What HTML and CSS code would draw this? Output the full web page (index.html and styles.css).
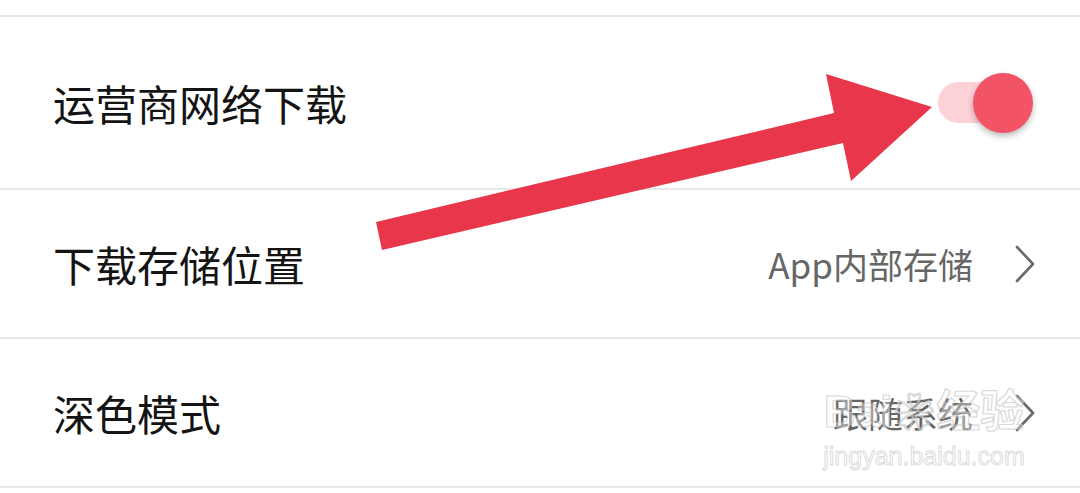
FILE: index.html
```html
<!DOCTYPE html>
<html lang="zh-CN">
<head>
<meta charset="utf-8">
<title>设置</title>
<link rel="stylesheet" href="styles.css">
</head>
<body>
<div class="page">
  <div class="list">
    <div class="row row-tall">
      <span class="label">运营商网络下载</span>
      <div class="toggle">
        <div class="track"></div>
        <div class="knob"></div>
      </div>
    </div>
    <div class="row">
      <span class="label">下载存储位置</span>
      <div class="value">
        <span class="value-text">App内部存储</span>
        <svg class="chev" width="20" height="38" viewBox="0 0 20 38"><polyline points="2,2 18,19 2,36" fill="none" stroke="#6a6a6a" stroke-width="2.6" stroke-linecap="round" stroke-linejoin="round"/></svg>
      </div>
    </div>
    <div class="row">
      <span class="label">深色模式</span>
      <div class="value">
        <span class="value-text">跟随系统</span>
        <svg class="chev" width="20" height="38" viewBox="0 0 20 38"><polyline points="2,2 18,19 2,36" fill="none" stroke="#6a6a6a" stroke-width="2.6" stroke-linecap="round" stroke-linejoin="round"/></svg>
      </div>
    </div>
  </div>

  <svg class="arrow" width="1080" height="493" viewBox="0 0 1080 493">
    <polygon points="376,222 834,113 826,74 932,107 851,181 843,143 382,250" fill="#e8364a"/>
  </svg>

  <div class="watermark">
    <div class="wm-logo">Bai<span class="wm-paw">❀</span>经验</div>
    <div class="wm-url">jingyan.baidu.com</div>
  </div>
</div>
</body>
</html>
```
FILE: styles.css
```css
html, body {
  margin: 0;
  padding: 0;
  background: #ffffff;
}

body {
  font-family: "Noto Sans CJK SC", "Noto Sans", sans-serif;
  width: 1080px;
  height: 493px;
  overflow: hidden;
}

.page {
  position: relative;
  width: 1080px;
  height: 493px;
}

.list {
  display: flex;
  flex-direction: column;
  padding-top: 15px;
}

.list::before {
  content: "";
  display: block;
  height: 2px;
  background: #e8e8e8;
}

.row {
  display: flex;
  align-items: center;
  justify-content: space-between;
  height: 147px;
  padding: 0 45px 0 53px;
  border-bottom: 2px solid #e8e8e8;
}

.row-tall {
  height: 171px;
  padding-right: 47px;
}

.label {
  font-size: 42px;
  font-weight: 400;
  line-height: 1;
  color: #141414;
  padding-top: 1px;
}

.value {
  display: flex;
  align-items: center;
  gap: 42px;
}

.value-text {
  font-size: 35px;
  font-weight: 400;
  line-height: 1;
  color: #666666;
}

.chev {
  display: block;
}

.toggle {
  position: relative;
  width: 95px;
  height: 60px;
}

.track {
  position: absolute;
  left: 0;
  top: 9px;
  width: 74px;
  height: 41px;
  border-radius: 21px;
  background: #fdd2d7;
}

.knob {
  position: absolute;
  right: 0;
  top: 0;
  width: 60px;
  height: 60px;
  border-radius: 50%;
  background: #f25466;
  box-shadow: 0 3px 6px rgba(0, 0, 0, 0.28);
}

.arrow {
  position: absolute;
  left: 0;
  top: 0;
  pointer-events: none;
}

.watermark {
  position: absolute;
  left: 824px;
  top: 390px;
  width: 200px;
  display: flex;
  flex-direction: column;
  align-items: center;
  pointer-events: none;
}

.wm-logo {
  font-family: "Liberation Sans", "Noto Sans CJK SC", sans-serif;
  font-size: 44px;
  font-weight: bold;
  line-height: 1;
  color: rgba(255, 255, 255, 0.35);
  -webkit-text-stroke: 1.2px rgba(195, 195, 195, 0.65);
  white-space: nowrap;
}

.wm-paw {
  display: inline-block;
  font-size: 40px;
  margin: 0 2px;
}

.wm-url {
  font-family: "Liberation Sans", sans-serif;
  font-size: 25px;
  line-height: 1;
  margin-top: 10px;
  color: rgba(255, 255, 255, 0.4);
  -webkit-text-stroke: 1px rgba(200, 200, 200, 0.65);
  white-space: nowrap;
}
```
